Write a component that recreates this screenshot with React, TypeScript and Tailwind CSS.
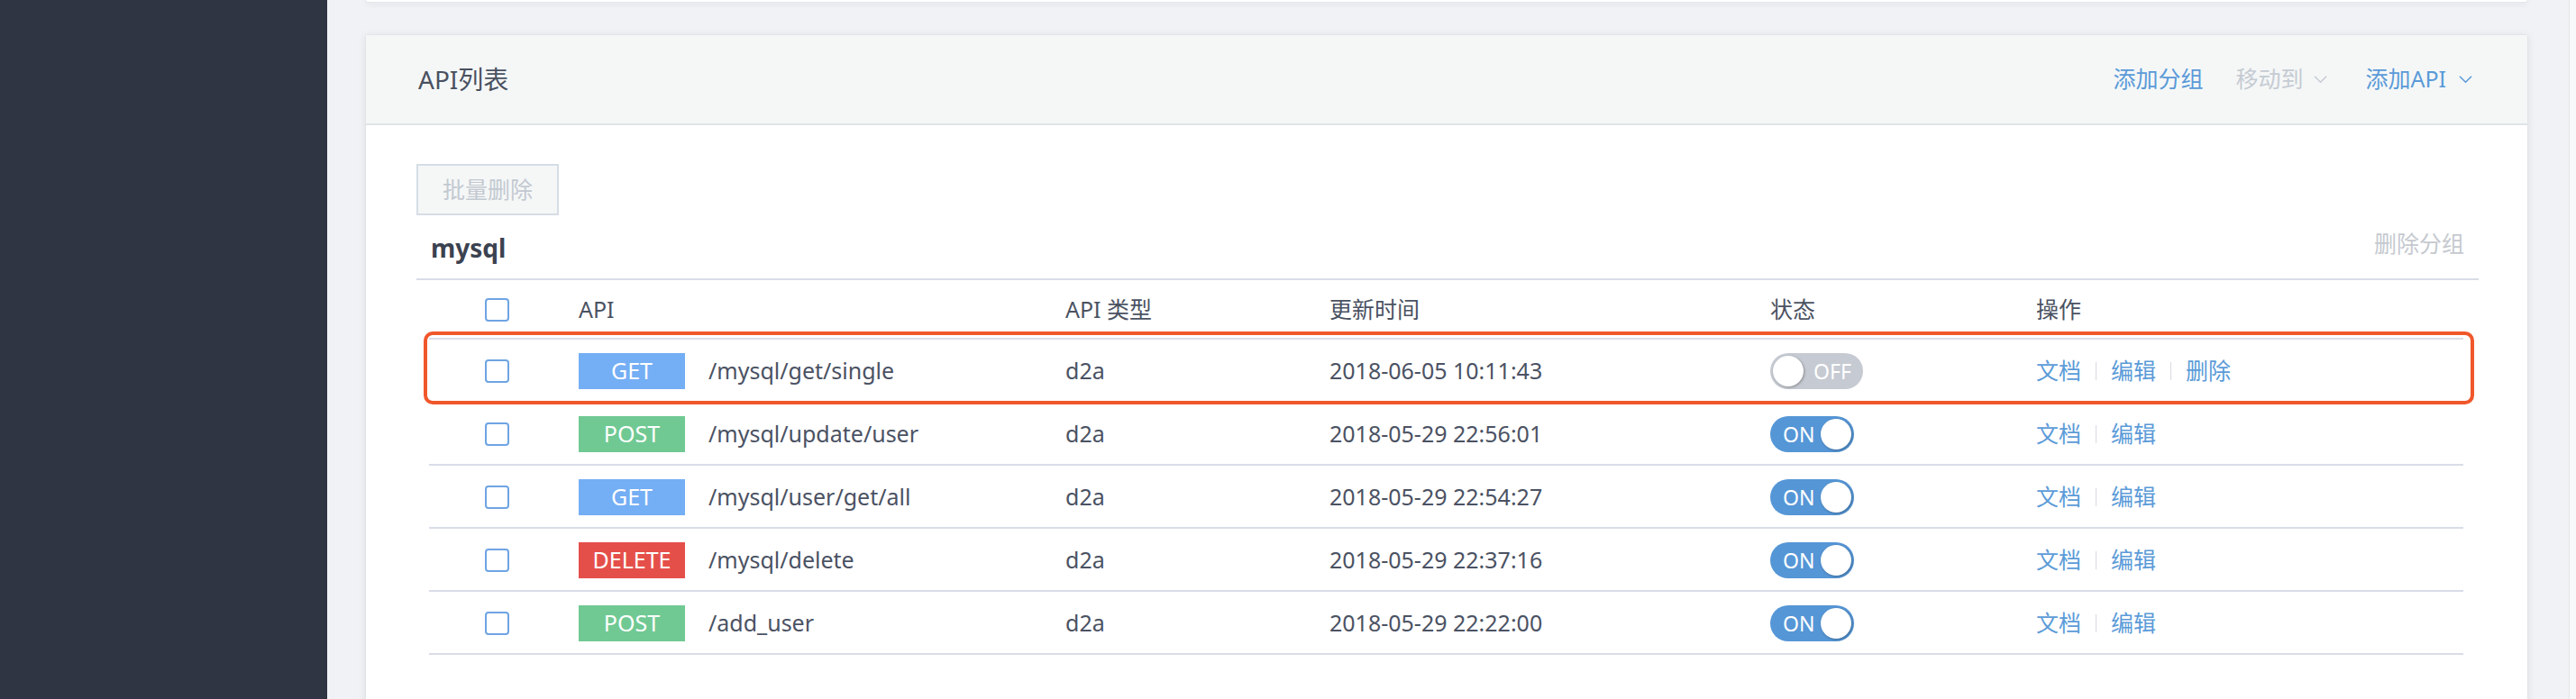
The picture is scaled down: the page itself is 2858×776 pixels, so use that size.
import React from "react";

type Api = {
  method: "GET" | "POST" | "DELETE";
  path: string;
  type: string;
  updated: string;
  on: boolean;
  canDelete?: boolean;
};

const apis: Api[] = [
  { method: "GET", path: "/mysql/get/single", type: "d2a", updated: "2018-06-05 10:11:43", on: false, canDelete: true },
  { method: "POST", path: "/mysql/update/user", type: "d2a", updated: "2018-05-29 22:56:01", on: true },
  { method: "GET", path: "/mysql/user/get/all", type: "d2a", updated: "2018-05-29 22:54:27", on: true },
  { method: "DELETE", path: "/mysql/delete", type: "d2a", updated: "2018-05-29 22:37:16", on: true },
  { method: "POST", path: "/add_user", type: "d2a", updated: "2018-05-29 22:22:00", on: true },
];

const methodColor: Record<Api["method"], string> = {
  GET: "bg-[#74aef4]",
  POST: "bg-[#70c993]",
  DELETE: "bg-[#e54f4a]",
};

function Chevron({ className }: { className?: string }) {
  return (
    <svg viewBox="0 0 16 10" className={className} fill="none" stroke="currentColor" strokeWidth="1.6">
      <polyline points="1,1.5 8,8.5 15,1.5" />
    </svg>
  );
}

function Checkbox() {
  return <div className="w-[27px] h-[26px] rounded-[4px] border-2 border-[#6ea4e3] bg-white" />;
}

function Toggle({ on }: { on: boolean }) {
  if (on) {
    return (
      <div className="w-[93px] h-[40px] rounded-full bg-[#5596d6] flex items-center justify-between pl-[14px] pr-[3px]">
        <span className="text-[23px] text-white leading-none">ON</span>
        <div className="w-[34px] h-[34px] rounded-full bg-white shadow-[1px_1px_3px_rgba(0,0,0,0.3)]" />
      </div>
    );
  }
  return (
    <div className="w-[103px] h-[40px] rounded-full bg-[#c6cad2] flex items-center gap-[11px] pl-[3px]">
      <div className="w-[34px] h-[34px] rounded-full bg-white shadow-[1px_1px_3px_rgba(0,0,0,0.3)]" />
      <span className="text-[23px] text-white leading-none">OFF</span>
    </div>
  );
}

function Sep() {
  return <div className="w-px h-[20px] bg-[#d5dae2] mx-[16px]" />;
}

function Row({ api, highlight }: { api: Api; highlight?: boolean }) {
  return (
    <div className="relative flex items-center h-[70px] pt-[2px] border-b-2 border-[#d9dde7] text-[25px] text-[#4b5263]">
      <div className="w-[166px] pl-[62px]">
        <Checkbox />
      </div>
      <div className="w-[540px] flex items-center gap-[26px]">
        <div className={`w-[118px] h-[40px] flex items-center justify-center text-white ${methodColor[api.method]}`}>
          {api.method}
        </div>
        <span>{api.path}</span>
      </div>
      <div className="w-[293px]">{api.type}</div>
      <div className="w-[489px]">{api.updated}</div>
      <div className="w-[295px]">
        <Toggle on={api.on} />
      </div>
      <div className="flex items-center text-[#5b9bd8]">
        <span>文档</span>
        <Sep />
        <span>编辑</span>
        {api.canDelete && (
          <>
            <Sep />
            <span>删除</span>
          </>
        )}
      </div>
      {highlight && (
        <div className="absolute -top-[9px] -left-[6px] -right-[12px] -bottom-[4px] border-4 border-[#f0572b] rounded-[10px] pointer-events-none" />
      )}
    </div>
  );
}

export default function App() {
  return (
    <div
      className="flex w-[2858px] h-[776px] overflow-hidden bg-[#f0f2f5]"
      style={{ fontFamily: '"Noto Sans", "Noto Sans CJK SC", sans-serif' }}
    >
      <aside className="w-[363px] shrink-0 bg-[#2f3542]" />

      <main className="flex-1 pl-[42px] pr-[45px]">
        <div className="h-[3px] bg-white rounded-b-[3px] border-x border-b border-[#e4e7eb] shadow-[0_2px_6px_rgba(0,0,0,0.08)]" />

        <section className="mt-[35px] bg-white border border-[#e1e4e8] rounded-[3px] shadow-[0_1px_8px_rgba(0,0,0,0.08)] h-[800px]">
          <header className="h-[100px] bg-[#f5f7f7] border-b-2 border-[#e0e4e8] flex items-center justify-between pl-[58px] pr-[61px]">
            <h2 className="text-[28px] text-[#4a5160]">API列表</h2>
            <div className="flex items-center text-[25px]">
              <span className="text-[#5a9ad8]">添加分组</span>
              <span className="ml-[36px] text-[#c5cbd3] flex items-center gap-[12px]">
                移动到
                <Chevron className="w-[15px] h-[10px]" />
              </span>
              <span className="ml-[42px] text-[#5a9ad8] flex items-center gap-[14px]">
                添加API
                <Chevron className="w-[15px] h-[10px]" />
              </span>
            </div>
          </header>

          <div className="pt-[43px] pl-[56px] pr-[54px]">
            <button className="h-[57px] w-[158px] bg-[#f5f7f7] border-2 border-[#d6dde6] text-[25px] text-[#c3c9d1]">
              批量删除
            </button>

            <div className="h-[72px] flex items-center justify-between pl-[16px] pr-[16px] border-b-2 border-[#d9dde7]">
              <span className="text-[28px] font-bold text-[#3b4250] pt-[2px]">mysql</span>
              <span className="text-[25px] text-[#c5c9cf] -mt-[6px]">删除分组</span>
            </div>

            <div className="ml-[14px] mr-[17px]">
              <div className="flex items-center h-[66px] pt-[2px] border-b-2 border-[#d9dde7] text-[25px] text-[#4a5262]">
                <div className="w-[166px] pl-[62px]">
                  <Checkbox />
                </div>
                <div className="w-[540px]">API</div>
                <div className="w-[293px]">API 类型</div>
                <div className="w-[489px]">更新时间</div>
                <div className="w-[295px]">状态</div>
                <div>操作</div>
              </div>
              {apis.map((api, i) => (
                <Row key={i} api={api} highlight={i === 0} />
              ))}
            </div>
          </div>
        </section>
      </main>

      <div className="w-[8px] shrink-0 bg-[#f7f8f9] border-l border-[#e3e5e8]" />
    </div>
  );
}
